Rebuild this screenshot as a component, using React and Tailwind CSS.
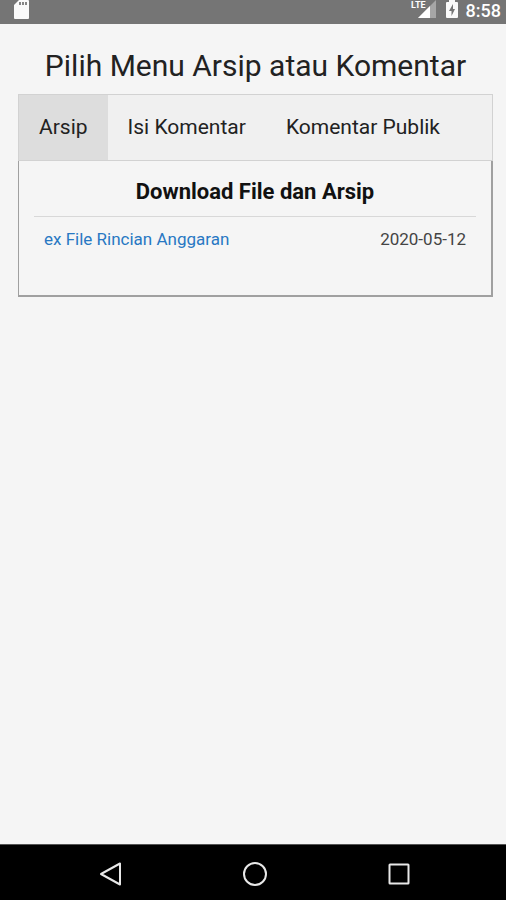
import { useState } from 'react'

const TABS = ['Arsip', 'Isi Komentar', 'Komentar Publik']

const FILES = [{ name: 'ex File Rincian Anggaran', date: '2020-05-12' }]

// Android status bar: sd card on the left, signal / battery / clock on the right
function StatusBar() {
  return (
    <header className="flex h-6 items-start justify-between bg-[#757575] pr-[5px] pl-3.5 text-white">
      <svg className="h-5 w-4" viewBox="0 0 16 20" aria-label="Kartu SD">
        <path d="M5 0h9q1 0 1 1v17q0 1-1 1H1q-1 0-1-1V5z" fill="#fafafa" />
        <path d="M5 2h2v3H5zM8 2h2v3H8zM11 2h2v3h-2z" fill="#858585" />
      </svg>
      <div className="flex items-start">
        <div className="relative mr-2.5">
          <svg className="h-5 w-[18px]" viewBox="0 0 18 20" aria-label="Sinyal">
            <path d="M18 0v18H0z" fill="#a6a6a6" />
            <path d="M12 6v12H0z" fill="#ffffff" />
          </svg>
          <span className="absolute top-0 right-2.5 bg-[#757575] text-[9px] leading-[10px] font-bold">LTE</span>
        </div>
        <svg className="mr-2 h-5 w-3" viewBox="0 0 12 20" aria-label="Baterai">
          <path d="M3 0h6v2h2q1 0 1 1v14q0 1-1 1H1q-1 0-1-1V3q0-1 1-1h2z" fill="#fafafa" />
          <path d="M7 4L3 11h2.5v5L9 9H7z" fill="#757575" />
        </svg>
        <time className="text-[18px] leading-[22px] font-medium">8:58</time>
      </div>
    </header>
  )
}

// Android navigation bar
function NavBar() {
  const icon = 'h-7 w-7 fill-none stroke-[#e8e8e8] stroke-2'
  return (
    <nav className="grid h-14 grid-cols-3 items-center justify-items-center border-t border-[#555] bg-black pt-0.5 pr-[35px] pl-[39px]">
      <button aria-label="Kembali">
        <svg className={icon} viewBox="0 0 28 28">
          <path d="M23 3.5v21L4 14z" strokeLinejoin="round" />
        </svg>
      </button>
      <button aria-label="Beranda">
        <svg className={icon} viewBox="0 0 28 28">
          <circle cx="14" cy="14" r="11" />
        </svg>
      </button>
      <button aria-label="Aplikasi terbaru">
        <svg className={icon} viewBox="0 0 28 28">
          <rect x="4.5" y="4.5" width="19" height="19" rx="0.5" />
        </svg>
      </button>
    </nav>
  )
}

export default function App() {
  const [tab, setTab] = useState('Arsip')

  return (
    <div className="flex min-h-screen flex-col bg-[#f5f5f5] font-['Roboto',sans-serif] text-[#222]">
      <StatusBar />

      <main className="flex-1 pt-[22px] pr-[13px] pl-[18px]">
        <h1 className="mb-2 text-center text-[30px] leading-10 whitespace-nowrap">Pilih Menu Arsip atau Komentar</h1>

        <div className="flex border border-[#d2d2d2] bg-[#f0f0f0]" role="tablist">
          {TABS.map((t) => (
            <button key={t} role="tab" aria-selected={tab === t} onClick={() => setTab(t)}
              className={`px-5 pt-4 pb-[17px] text-[21px] leading-8 whitespace-nowrap ${tab === t ? 'bg-[#dddddd]' : ''}`}>
              {t}
            </button>
          ))}
        </div>

        {tab === 'Arsip' && (
          <section className="border-r-2 border-b-2 border-l border-[#a0a0a0] px-[15px] pt-[15px] pb-11">
            <h2 className="text-center text-[22px] leading-8 font-bold text-[#111]">Download File dan Arsip</h2>
            <table className="mt-2 w-full border-t border-[#d8d8d8] text-[17px] leading-6">
              <tbody>
                {FILES.map((f) => (
                  <tr key={f.name}>
                    <td className="pt-2.5 pl-2.5">
                      <a href="#file" className="text-[#2878c3]">{f.name}</a>
                    </td>
                    <td className="pt-2.5 pr-2.5 text-right text-[#444]">{f.date}</td>
                  </tr>
                ))}
              </tbody>
            </table>
          </section>
        )}
      </main>

      <NavBar />
    </div>
  )
}
